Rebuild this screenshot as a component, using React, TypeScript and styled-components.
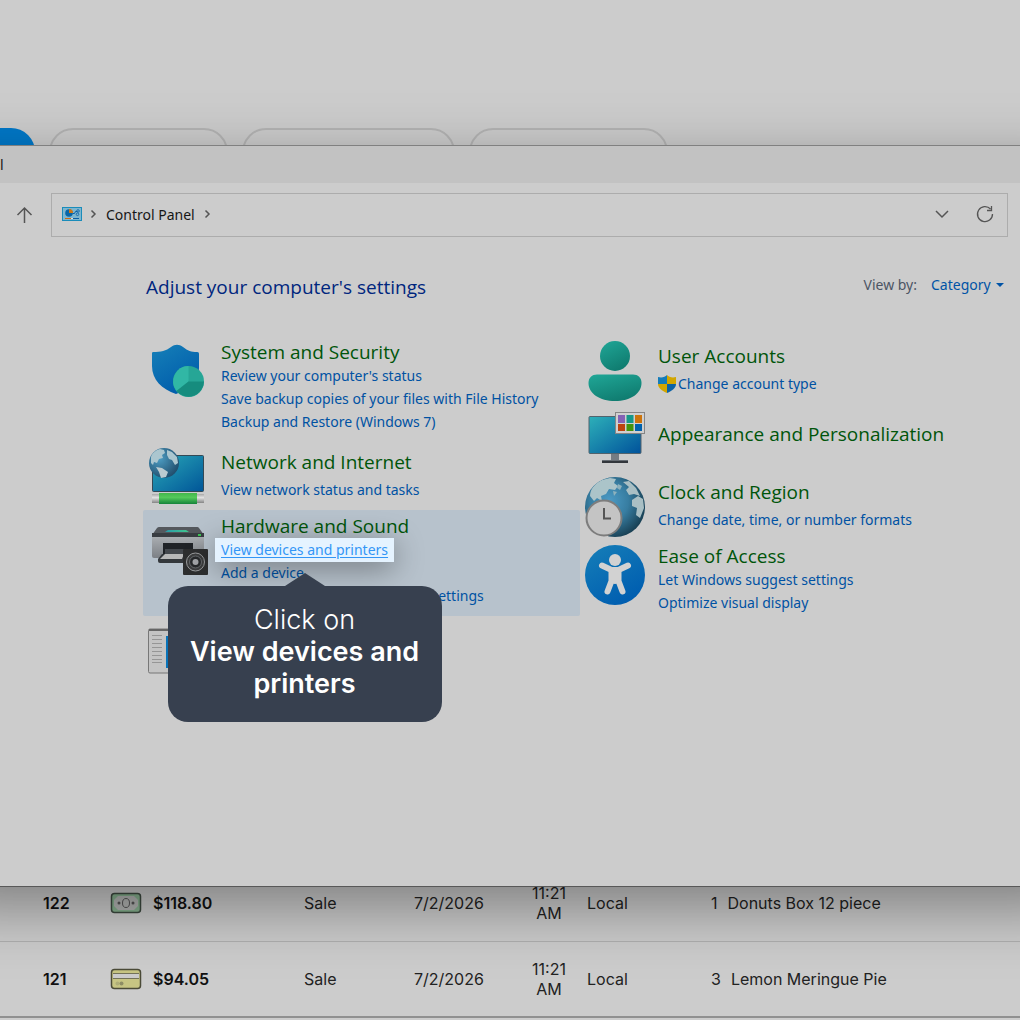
import React from "react";
import styled, { createGlobalStyle, css } from "styled-components";

const GlobalStyle = createGlobalStyle`
  *, *::before, *::after { box-sizing: border-box; }
  html, body { margin: 0; background: #cccccc; }
  body { font-family: "Noto Sans", "Liberation Sans", sans-serif; font-size: 14px; color: #161616; }
  button, select { font: inherit; color: inherit; background: none; border: 0; padding: 0; margin: 0; }
  svg { display: block; flex: none; overflow: visible; }
`;

const Page = styled.div`
  height: 100vh;
  overflow: hidden;
  background: #cccccc;
`;

/* ---------- page behind the window ---------- */

const FilterStrip = styled.div`
  display: flex;
  gap: 14px;
  height: 145px;
  padding-top: 128px;
  overflow: hidden;
`;

const Pill = styled.div<{ $width: number; $active?: boolean }>`
  flex: none;
  width: ${(p) => p.$width}px;
  height: 48px;
  border: 2px solid #b4b4b4;
  border-radius: 24px;
  ${(p) =>
    p.$active &&
    css`
      border: 0;
      border-radius: 0 24px 24px 0;
      background: #0078c8;
    `}
`;

const SalesTable = styled.table`
  width: 100%;
  margin-top: -22px;
  border-collapse: collapse;
  table-layout: fixed;
  border-bottom: 2px solid #909090;
  font-family: Inter, "Liberation Sans", sans-serif;
  font-size: 16px;
  line-height: 20px;
  color: #222222;
`;

const Cell = styled.td<{ $bold?: boolean; $indent?: boolean; $time?: boolean }>`
  height: 76px;
  padding: 0;
  border-bottom: 1px solid #b0b0b0;
  vertical-align: middle;
  white-space: nowrap;
  ${(p) => p.$bold && css`font-weight: 600; color: #111111;`}
  ${(p) => p.$indent && css`padding-left: 43px;`}
  ${(p) => p.$time && css`padding: 0 20px 0 6px; text-align: center; white-space: normal;`}
`;

const Quantity = styled.span`
  margin-right: 10px;
`;

/* ---------- window ---------- */

const Window = styled.main`
  position: relative;
  z-index: 1;
  border-top: 1px solid #8f8f8f;
  border-bottom: 1px solid #7c7c7c;
  background: #cccccc;
  padding-bottom: 198px;

  /* the shadow is cast past both side edges so that it stays even */
  &::before {
    content: "";
    position: absolute;
    z-index: -1;
    inset: 0 -60px;
    box-shadow: 0 20px 60px rgba(0, 0, 0, 0.4);
  }
`;

const TitleBar = styled.header`
  height: 37px;
  background: #c2c2c2;
  line-height: 37px;
`;

const NavRow = styled.div`
  display: flex;
  align-items: center;
  padding: 10px 12px 0 16px;
  color: #555555;
`;

const IconButton = styled.button`
  display: flex;
  align-items: center;
  justify-content: center;
  width: 18px;
  height: 18px;
`;

const AddressBar = styled.nav`
  flex: 1;
  display: flex;
  align-items: center;
  justify-content: space-between;
  height: 44px;
  margin-left: 17px;
  padding: 0 13px 2px 10px;
  border: 1px solid #acacac;
`;

const Trail = styled.div`
  display: flex;
  align-items: center;
`;

const Crumb = styled.button`
  padding: 0 9px;
  color: #161616;
`;

const FirstChevron = styled.span`
  margin-left: 8px;
`;

const BarActions = styled.div`
  display: flex;
  gap: 25px;
`;

const PageHeader = styled.div`
  display: flex;
  justify-content: space-between;
  align-items: flex-start;
  height: 28px;
  margin: 36px 16px 0 146px;
`;

const PageTitle = styled.h1`
  margin: 0;
  font-family: "Open Sans", "Noto Sans", sans-serif;
  font-size: 19px;
  line-height: 28px;
  font-weight: 400;
  color: #00267e;
`;

const ViewBy = styled.div`
  display: flex;
  align-items: center;
  line-height: 24px;
  color: #4c5564;
`;

const ViewSelect = styled.select`
  appearance: none;
  height: 24px;
  margin: 0 5px 0 14px;
  color: #0053a6;
`;

const Categories = styled.div`
  display: grid;
  grid-template-columns: 1fr 1fr;
  padding: 35px 3px 0 143px;
`;

const Column = styled.div<{ $lower?: boolean }>`
  display: flex;
  flex-direction: column;
  gap: 4px;
  padding-top: ${(p) => (p.$lower ? 4 : 0)}px;
`;

type Density = "list" | "single" | "title";

const Item = styled.section<{ $density: Density; $hover?: boolean }>`
  display: flex;
  gap: 13px;
  min-height: 60px;
  padding-left: 5px;
  border-radius: 2px;
  background: ${(p) => (p.$hover ? "#b7c2cc" : "transparent")};
  ${(p) => p.$density === "list" && css`& > svg { margin-top: 5px; }`}
  ${(p) => p.$density === "title" && css`align-items: center; margin-bottom: 8px;`}
`;

const ItemText = styled.div<{ $density: Density }>`
  display: flex;
  flex-direction: column;
  align-items: flex-start;
  padding: ${(p) => (p.$density === "title" ? "0" : p.$density === "single" ? "4px 0 0" : "4px 0 9px")};
  gap: ${(p) => (p.$density === "single" ? 4 : 0)}px;
`;

const ItemTitle = styled.h2`
  margin: 0;
  font-family: "Open Sans", "Noto Sans", sans-serif;
  font-size: 19px;
  line-height: 24px;
  font-weight: 400;
  color: #00550a;
`;

const TaskList = styled.ul`
  margin: 0;
  padding: 0;
  list-style: none;
`;

const Task = styled.li`
  display: flex;
  align-items: center;
  gap: 2px;
  height: 23px;
`;

const TaskLink = styled.a`
  color: #0052a3;
  line-height: 23px;
  white-space: nowrap;
  text-decoration: none;
`;

/* ---------- walkthrough step ---------- */

const Spotlight = styled.div`
  position: relative;
  margin: 0 -6px;
  padding: 0 6px;
  background: #e5f3ff;
  box-shadow: 0 6px 30px rgba(0, 0, 0, 0.4);

  & > a {
    display: block;
    line-height: 24px;
    color: #3396f6;
    text-decoration: underline;
    text-underline-offset: 2px;
  }
`;

const Tip = styled.div`
  position: absolute;
  z-index: 2;
  top: calc(100% + 24px);
  left: 50%;
  width: 274px;
  transform: translateX(-50%);
  padding: 18px 16px 22px;
  border-radius: 20px;
  background: #37404f;
  color: #ffffff;
  font-family: Inter, "Liberation Sans", sans-serif;
  font-size: 27px;
  line-height: 32px;
  font-weight: 300;
  text-align: center;

  &::before {
    content: "";
    position: absolute;
    bottom: 100%;
    left: 50%;
    transform: translateX(-50%);
    border: 20px solid transparent;
    border-top: 0;
    border-bottom: 13px solid #37404f;
  }

  & > strong {
    display: block;
    font-weight: 600;
  }
`;

/* ---------- icons ---------- */

const Chevron = () => (
  <svg width="7" height="10" viewBox="0 0 7 10" fill="none" stroke="#555" strokeWidth="1.5">
    <path d="M1.5 1.5 5 5 1.5 8.5" />
  </svg>
);

const PanelIcon = () => (
  <svg width="20" height="14" viewBox="0 0 20 14">
    <rect x=".5" y=".5" width="19" height="13" fill="#7eb6cf" stroke="#1a8cba" />
    <circle cx="7" cy="6" r="3.8" fill="#0766a8" />
    <path d="M7 6V2a4 4 0 0 1 4 4z" fill="#cc7718" />
    <path d="M10.500 6.500h2l1-2h2" stroke="#0a5fa5" fill="none" />
    <circle cx="16" cy="4" r="1.300" stroke="#0a5fa5" fill="none" strokeWidth=".8" />
    <circle cx="15.500" cy="7.300" r="1.300" stroke="#0a5fa5" fill="none" strokeWidth=".8" />
    <path d="M3 11.500h6" stroke="#cc6a12" />
    <path d="M11 11.500h6" stroke="#0a5fa5" />
    <path d="M9 11.500h2" stroke="#ddd" />
  </svg>
);

const Land = () => (
  <>
    <path d="M5 20C5 14 9 8 17 4l8-2 6 1-2 4 4 3-3 4-6-1-3 5-5 2 1 5-5-3-3 3z" fill="#abc4c9" />
    <path d="M10 31l8 2 6 5-4 6-3 7-4-5-1-8z" fill="#bdcccf" />
    <path d="M38 6l6-1 7 7 4 8-6-2-5 1-3-5 3-3zM47 24l6-4 5 3 1 9-4 10-4-3 1-7-5-2z" fill="#a9bfc4" />
    <path d="M33 8l4 2-2 4-3-2zM28 15l4 1-3 4z" fill="#8eb2bd" />
  </>
);

const GlobeOnMonitorLand = () => (
  <>
    <path d="M4 11c1-4 5-7 9-8l4 1 1 3-3 2 1 3-4 1-2 4-3-1-1 3-2-2zM20 4l5 2 5 5 1 6-3 2-3-5-3-1-2-4z" fill="#abc6cf" />
    <path d="M9 21l6 1 6 4-2 5-5 1-2-6z" fill="#bccbd0" />
  </>
);

const SecurityIcon = () => (
  <svg width="60" height="60" viewBox="0 0 60 60">
    <defs>
      <linearGradient id="shield" x1="0" y1="0" x2=".6" y2="1">
        <stop offset="0" stopColor="#1680b8" />
        <stop offset="1" stopColor="#005cab" />
      </linearGradient>
    </defs>
    <path d="M5 11c8 0 13-1 18-5 4-3 8-3 12 0 5 4 8 5 14 5 2 0 2 1 2 3v13c0 13-10 21-23 26C14 48 4 39 4 25V13c0-1 0-2 1-2z" fill="url(#shield)" />
    <circle cx="40.500" cy="40.500" r="15.500" fill="#26a696" />
    <path d="M40.500 40.500V25A15.500 15.500 0 0 0 28.500 50z" fill="#31b7a5" />
    <path d="M40.500 40.500H56A15.500 15.500 0 0 1 28.500 50z" fill="#168c7e" />
  </svg>
);

const NetworkIcon = () => (
  <svg width="60" height="60" viewBox="0 0 60 60">
    <defs>
      <linearGradient id="net" x1="0" y1="0" x2="1" y2="1">
        <stop offset="0" stopColor="#2aa9b8" />
        <stop offset="1" stopColor="#005598" />
      </linearGradient>
      <radialGradient id="netGlobe" cx=".35" cy=".35" r=".7">
        <stop offset="0" stopColor="#4d9dc3" />
        <stop offset="1" stopColor="#214e6d" />
      </radialGradient>
      <linearGradient id="cable" x1="0" y1="0" x2="0" y2="1">
        <stop offset="0" stopColor="#42b64b" />
        <stop offset=".4" stopColor="#55c95b" />
        <stop offset="1" stopColor="#16843a" />
      </linearGradient>
      <linearGradient id="plug" x1="0" y1="0" x2="0" y2="1">
        <stop offset="0" stopColor="#a8a8a8" />
        <stop offset=".4" stopColor="#e2e2e2" />
        <stop offset="1" stopColor="#858585" />
      </linearGradient>
    </defs>
    <rect x="4.500" y="9.500" width="51" height="36" rx="1" fill="url(#net)" stroke="#344955" />
    <circle cx="16" cy="17" r="15" fill="url(#netGlobe)" />
    <g transform="translate(-1 0)"><GlobeOnMonitorLand /></g>
    <rect x="4" y="48" width="52" height="9" fill="url(#plug)" />
    <rect x="11" y="47" width="38" height="11" fill="url(#cable)" />
  </svg>
);

const HardwareIcon = () => (
  <svg width="60" height="60" viewBox="0 0 60 60">
    <defs>
      <linearGradient id="body" x1="0" y1="0" x2="0" y2="1">
        <stop offset="0" stopColor="#adb1b5" />
        <stop offset="1" stopColor="#7c8085" />
      </linearGradient>
      <linearGradient id="glass" x1="0" y1="0" x2="1" y2="0">
        <stop offset="0" stopColor="#2a9aaa" />
        <stop offset="1" stopColor="#42c78d" />
      </linearGradient>
    </defs>
    <path d="M4 20h52v21a2 2 0 0 1-2 2H6a2 2 0 0 1-2-2z" fill="url(#body)" />
    <path d="M11 12h38a2 2 0 0 1 2 1l5 7H4l5-7q1-1 2-1z" fill="#54585d" />
    <path d="M4 18h52v4H4z" fill="#393d42" />
    <path d="M20 15h18l3 2H17z" fill="url(#glass)" />
    <path d="M50 19h3v2h-3z" fill="#3cc653" />
    <path d="M15 28h30v15H15z" fill="#202327" />
    <path d="M17 34h26v5H17z" fill="#44484d" />
    <path d="M10 44l4-5h28v9H12q-2 0-2-2z" fill="#34383c" />
    <path d="M12 44l5-5h19l-2 5z" fill="#b8b8b8" />
    <rect x="35" y="34" width="25" height="26" rx="1" fill="#2d2e2f" />
    <circle cx="47.500" cy="47" r="9" fill="#3c3d3e" stroke="#999b9d" />
    <circle cx="47.500" cy="47" r="6" fill="#27292b" stroke="#65686b" />
    <circle cx="47.500" cy="47" r="3" fill="#a2a4a7" />
  </svg>
);

const ProgramsIcon = () => (
  <svg width="60" height="60" viewBox="0 0 60 60">
    <rect x=".5" y="9" width="59" height="44" rx="1.500" fill="#c4c4c4" stroke="#777" />
    <path d="M1 10h58" stroke="#666" strokeWidth="2" />
    <path d="M4 15.500h10M4 19.500h10M4 23.500h10M4 27.500h10M4 31.500h10M4 35.500h10M4 39.500h10M4 42.500h10" stroke="#969696" />
    <path d="M18 16h36v32H18z" fill="#0873b9" />
  </svg>
);

const UsersIcon = () => (
  <svg width="60" height="60" viewBox="0 0 60 60">
    <defs>
      <linearGradient id="user" x1="0" y1="0" x2=".5" y2="1">
        <stop offset="0" stopColor="#20a797" />
        <stop offset="1" stopColor="#107d71" />
      </linearGradient>
    </defs>
    <circle cx="30" cy="16" r="15" fill="url(#user)" />
    <path d="M12 34.500h36c5 0 8.500 3 8.500 8.500 0 10.500-11 18-26.500 18S3.500 53.500 3.500 43c0-5.500 3.500-8.500 8.500-8.500z" fill="url(#user)" />
  </svg>
);

const ShieldIcon = () => (
  <svg width="18" height="18" viewBox="0 0 18 18">
    <path d="M9 0C7 2 4 3 0 2v7h9z" fill="#147cb9" />
    <path d="M9 0c2 2 5 3 9 2v7H9z" fill="#d2a600" />
    <path d="M0 9h9v9C4 16 0 13 0 9z" fill="#d2a600" />
    <path d="M18 9H9v9c5-2 9-5 9-9z" fill="#0b62a6" />
  </svg>
);

const AppearanceIcon = () => (
  <svg width="60" height="60" viewBox="0 0 60 60">
    <defs>
      <linearGradient id="screen" x1="0" y1="0" x2="1" y2="1">
        <stop offset="0" stopColor="#2db0b9" />
        <stop offset="1" stopColor="#00529b" />
      </linearGradient>
    </defs>
    <path d="M26 50h8v6h-8z" fill="#757c83" />
    <path d="M17 56h26v2H17z" fill="#666c72" />
    <path d="M17 57h26v2H17z" fill="#32363b" />
    <rect x="4" y="12.500" width="52" height="37" rx="1" fill="url(#screen)" stroke="#52636d" />
    <rect x="30.500" y="8.500" width="29" height="21" fill="#d0d0d0" stroke="#858585" />
    <path d="M33 11h7v8h-7z" fill="#8562b5" />
    <path d="M41.500 11h7v8h-7z" fill="#169889" />
    <path d="M50 11h7v8h-7z" fill="#cc740c" />
    <path d="M33 20h7v7h-7z" fill="#bd430f" />
    <path d="M41.500 20h7v7h-7z" fill="#43940c" />
    <path d="M50 20h7v7h-7z" fill="#0062ad" />
  </svg>
);

const ClockIcon = () => (
  <svg width="60" height="60" viewBox="0 0 60 60">
    <defs>
      <radialGradient id="globe" cx=".4" cy=".4" r=".65">
        <stop offset="0" stopColor="#4c9bc5" />
        <stop offset=".5" stopColor="#377da1" />
        <stop offset="1" stopColor="#173d50" />
      </radialGradient>
      <clipPath id="globeClip"><circle cx="30" cy="31" r="30" /></clipPath>
    </defs>
    <circle cx="30" cy="31" r="30" fill="url(#globe)" />
    <g clipPath="url(#globeClip)"><Land /></g>
    <circle cx="19" cy="42" r="17.500" fill="#c4c4c4" stroke="#7d7d7d" strokeWidth="2" />
    <path d="M19 32v10.500h7" fill="none" stroke="#555" strokeWidth="2" />
  </svg>
);

const AccessIcon = () => (
  <svg width="60" height="60" viewBox="0 0 60 60">
    <defs>
      <linearGradient id="access" x1="0" y1="0" x2=".6" y2="1">
        <stop offset="0" stopColor="#167fb8" />
        <stop offset="1" stopColor="#005eb0" />
      </linearGradient>
    </defs>
    <circle cx="30" cy="30" r="30" fill="url(#access)" />
    <circle cx="30" cy="15" r="6" fill="#d2d2d2" />
    <path d="M17 20.500l9.500 4.500h7l9.500-4.500M26.500 26v10L22.500 46.500M33.500 26v10l4 10.500M30 26v10" fill="none" stroke="#d2d2d2" strokeWidth="6" strokeLinecap="round" strokeLinejoin="round" />
  </svg>
);

const CashIcon = () => (
  <svg width="32" height="22" viewBox="0 0 32 22">
    <rect x="1.500" y="1.500" width="29" height="19" rx="3" fill="#86b08e" stroke="#3c493f" strokeWidth="1.500" />
    <path d="M8 4h16l4 4v6l-4 4H8l-4-4V8z" fill="#b2b4b2" />
    <ellipse cx="16" cy="11" rx="3.500" ry="4.500" fill="none" stroke="#555" />
    <circle cx="9" cy="11" r="1.500" fill="#555" />
    <circle cx="23" cy="11" r="1.500" fill="#555" />
  </svg>
);

const CardIcon = () => (
  <svg width="32" height="22" viewBox="0 0 32 22">
    <rect x="1.500" y="1.500" width="29" height="19" rx="3" fill="#c7c583" stroke="#4b4b38" strokeWidth="1.500" />
    <path d="M3 6h26v4H3z" fill="#cccccc" />
    <path d="M3 5.500h26M3 10.500h26" stroke="#74735a" />
    <circle cx="7.500" cy="15.500" r="2" fill="#aead78" />
    <circle cx="11.500" cy="15.500" r="2" fill="#8e8d64" />
  </svg>
);

/* ---------- content ---------- */

interface CategoryProps {
  icon: React.ReactNode;
  title?: string;
  tasks?: React.ReactNode[];
  hover?: boolean;
}

function Category({ icon, title, tasks = [], hover }: CategoryProps) {
  const density: Density = tasks.length > 1 ? "list" : tasks.length === 1 ? "single" : "title";
  return (
    <Item $density={density} $hover={hover}>
      {icon}
      {title && (
        <ItemText $density={density}>
          <ItemTitle>{title}</ItemTitle>
          {tasks.length > 0 && (
            <TaskList>
              {tasks.map((task, i) => (
                <Task key={i}>{typeof task === "string" ? <TaskLink href="#">{task}</TaskLink> : task}</Task>
              ))}
            </TaskList>
          )}
        </ItemText>
      )}
    </Item>
  );
}

const sales = [
  { id: "122", icon: <CashIcon />, total: "$118.80", qty: 1, item: "Donuts Box 12 piece" },
  { id: "121", icon: <CardIcon />, total: "$94.05", qty: 3, item: "Lemon Meringue Pie" },
];

const columnWidths = [110, 43, 151, 110, 111, 62, 124];

export default function App() {
  return (
    <Page>
      <GlobalStyle />
      <FilterStrip>
        <Pill $width={35} $active />
        <Pill $width={179} />
        <Pill $width={213} />
        <Pill $width={199} />
      </FilterStrip>

      <Window>
        <TitleBar>l</TitleBar>
        <NavRow>
          <IconButton aria-label="Up">
            <svg width="18" height="18" viewBox="0 0 18 18" fill="none" stroke="#555" strokeWidth="1.500">
              <path d="M8.500 17V2M1.500 9l7-7 7 7" />
            </svg>
          </IconButton>
          <AddressBar>
            <Trail>
              <PanelIcon />
              <FirstChevron>
                <Chevron />
              </FirstChevron>
              <Crumb>Control Panel</Crumb>
              <Chevron />
            </Trail>
            <BarActions>
              <IconButton aria-label="Recent locations">
                <svg width="14" height="8" viewBox="0 0 14 8" fill="none" stroke="#555" strokeWidth="1.500">
                  <path d="M1 1l6 6 6-6" />
                </svg>
              </IconButton>
              <IconButton aria-label="Refresh">
                <svg width="18" height="18" viewBox="0 0 18 18" fill="none" stroke="#555" strokeWidth="1.300">
                  <path d="M16.500 9A7.500 7.500 0 1 1 14.500 4M15.500 1v4.500H11" />
                </svg>
              </IconButton>
            </BarActions>
          </AddressBar>
        </NavRow>

        <PageHeader>
          <PageTitle>Adjust your computer's settings</PageTitle>
          <ViewBy>
            <label htmlFor="view-by">View by:</label>
            <ViewSelect id="view-by">
              <option>Category</option>
            </ViewSelect>
            <svg width="8" height="4" viewBox="0 0 8 4">
              <path d="M0 0h8L4 4z" fill="#0053a6" />
            </svg>
          </ViewBy>
        </PageHeader>

        <Categories>
          <Column>
            <Category
              icon={<SecurityIcon />}
              title="System and Security"
              tasks={[
                "Review your computer's status",
                "Save backup copies of your files with File History",
                "Backup and Restore (Windows 7)",
              ]}
            />
            <Category icon={<NetworkIcon />} title="Network and Internet" tasks={["View network status and tasks"]} />
            <Category
              hover
              icon={<HardwareIcon />}
              title="Hardware and Sound"
              tasks={[
                <Spotlight>
                  <TaskLink href="#">View devices and printers</TaskLink>
                  <Tip role="tooltip">
                    Click on <strong>View devices and printers</strong>
                  </Tip>
                </Spotlight>,
                "Add a device",
                "Adjust commonly used mobility settings",
              ]}
            />
            <Category icon={<ProgramsIcon />} />
          </Column>
          <Column $lower>
            <Category
              icon={<UsersIcon />}
              title="User Accounts"
              tasks={[
                <>
                  <ShieldIcon />
                  <TaskLink href="#">Change account type</TaskLink>
                </>,
              ]}
            />
            <Category icon={<AppearanceIcon />} title="Appearance and Personalization" />
            <Category icon={<ClockIcon />} title="Clock and Region" tasks={["Change date, time, or number formats"]} />
            <Category
              icon={<AccessIcon />}
              title="Ease of Access"
              tasks={["Let Windows suggest settings", "Optimize visual display"]}
            />
          </Column>
        </Categories>
      </Window>

      <SalesTable>
        <colgroup>
          {columnWidths.map((width, i) => (
            <col key={i} width={width} />
          ))}
          <col />
        </colgroup>
        <tbody>
          {sales.map((sale) => (
            <tr key={sale.id}>
              <Cell $bold $indent>{sale.id}</Cell>
              <Cell>{sale.icon}</Cell>
              <Cell $bold>{sale.total}</Cell>
              <Cell>Sale</Cell>
              <Cell>7/2/2026</Cell>
              <Cell $time>11:21 AM</Cell>
              <Cell>Local</Cell>
              <Cell>
                <Quantity>{sale.qty}</Quantity>
                {sale.item}
              </Cell>
            </tr>
          ))}
        </tbody>
      </SalesTable>
    </Page>
  );
}
